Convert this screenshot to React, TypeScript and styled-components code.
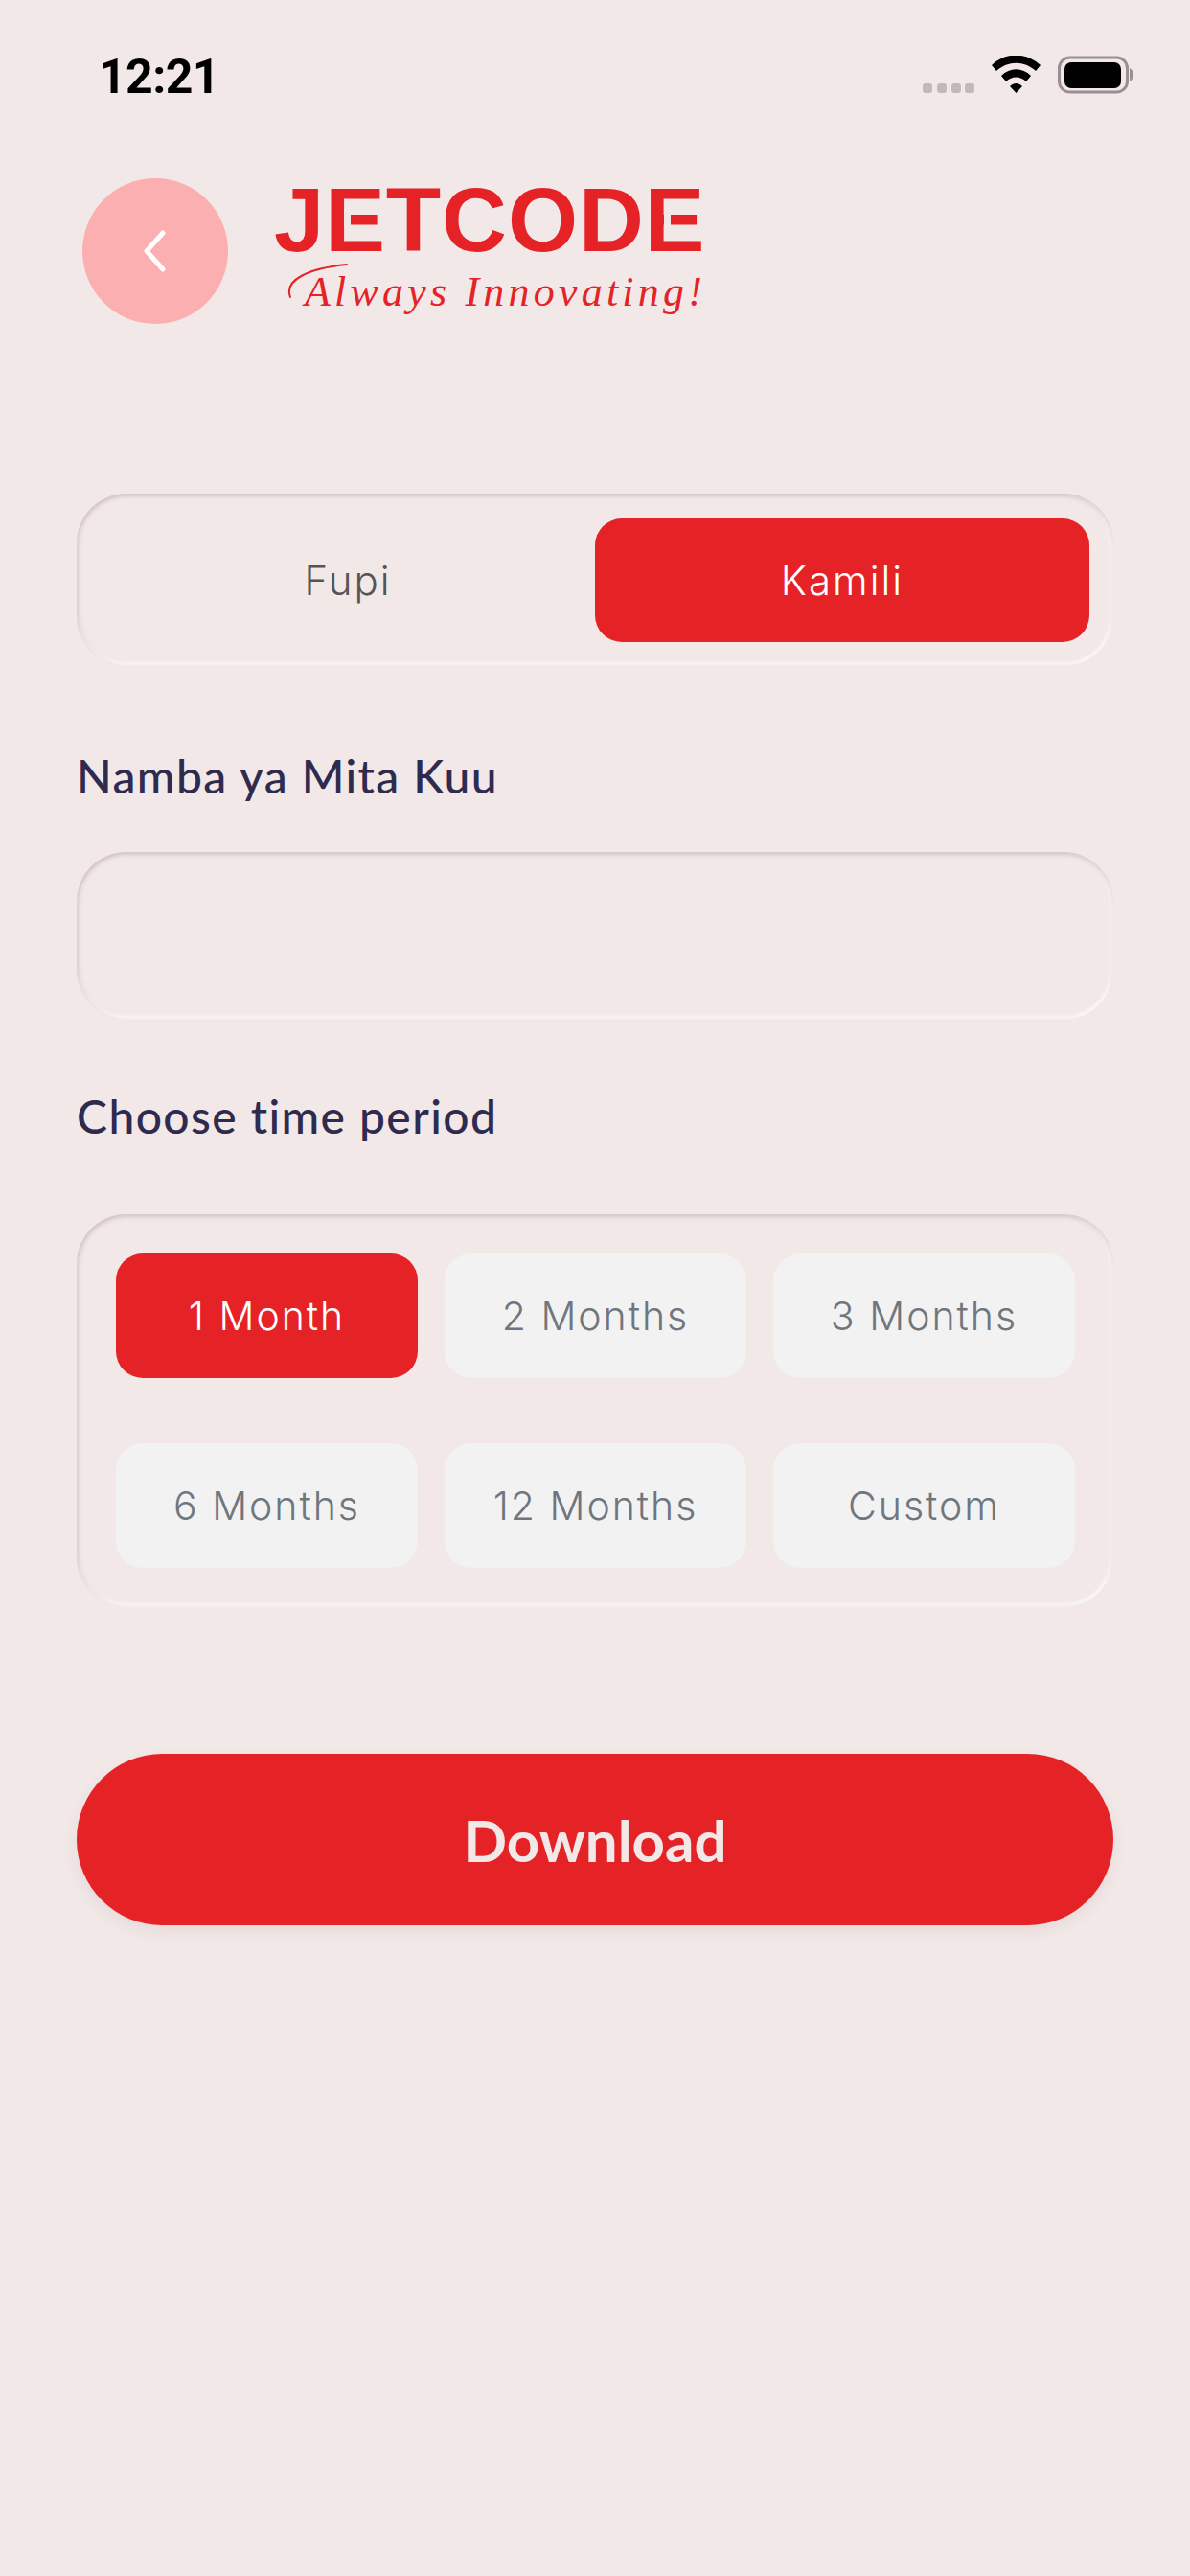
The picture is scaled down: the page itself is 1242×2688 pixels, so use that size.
import styled, { createGlobalStyle } from "styled-components";

const RED = "#e52327";
const BG = "#f2e8e8";

const GlobalStyle = createGlobalStyle`
   html, body {
      margin: 0;
      padding: 0;
      background: ${BG};
   }
   * {
      box-sizing: border-box;
   }
`;

const Page = styled.div`
   width: 1242px;
   height: 2688px;
   overflow: hidden;
   background: ${BG};
   font-family: "Lato", "Liberation Sans", sans-serif;
`;

const StatusBar = styled.div`
   height: 186px;
   padding: 53px 58px 0 103px;
   display: flex;
   justify-content: space-between;
   align-items: flex-start;
`;

const Clock = styled.span`
   font-family: "Roboto", sans-serif;
   font-weight: 700;
   font-size: 50px;
   line-height: 55px;
   letter-spacing: -0.6px;
   color: #000;
`;

const StatusIcons = styled.div`
   display: flex;
   align-items: flex-start;
   padding-top: 5px;
`;

const Header = styled.header`
   display: flex;
   align-items: flex-start;
   gap: 50px;
   padding-left: 86px;
`;

const BackButton = styled.button`
   width: 152px;
   height: 152px;
   flex: none;
   border: none;
   padding: 0;
   border-radius: 50%;
   background: #fbafb0;
   display: flex;
   align-items: center;
   justify-content: center;
`;

const Logo = styled.div`
   position: relative;
   width: 450px;
   padding-top: 6px;
   color: ${RED};
`;

const LogoTitle = styled.div`
   font-family: "Liberation Sans", sans-serif;
   font-weight: 700;
   font-size: 94px;
   line-height: 76px;
   white-space: nowrap;
   margin-left: -2px;
   letter-spacing: 0.9px;
   font-kerning: none;
`;

const LogoNotch = styled.span<{ $left: number }>`
   position: absolute;
   top: 32px;
   left: ${(p) => p.$left}px;
   width: 7px;
   height: 18px;
   background: ${BG};
`;

const LogoSwash = styled.svg`
   position: absolute;
   top: 88px;
   left: 10px;
`;

const LogoTagline = styled.div`
   font-family: "Liberation Serif", serif;
   font-style: italic;
   font-size: 44px;
   line-height: 50px;
   white-space: nowrap;
   margin: 12px 0 0 30px;
   letter-spacing: 4.2px;
`;

const Form = styled.main`
   padding: 329px 80px 0 80px;
   margin-top: -152px;
`;

const insetWell = `
   box-shadow:
      inset 0 3px 4px rgba(150, 130, 130, 0.3),
      inset 3px 0 4px rgba(150, 130, 130, 0.14),
      inset 0 -4px 3px rgba(255, 255, 255, 0.6),
      inset -4px 0 3px rgba(255, 255, 255, 0.5);
`;

const Segmented = styled.div`
   height: 180px;
   border-radius: 52px;
   padding: 26px 25px 25px 25px;
   display: grid;
   grid-template-columns: 1fr 516px;
   ${insetWell}
`;

const SegmentButton = styled.div<{ $active?: boolean }>`
   border-radius: 28px;
   display: flex;
   align-items: center;
   justify-content: center;
   font-family: "Inter", sans-serif;
   font-size: 42px;
   letter-spacing: 2px;
   font-weight: 300;
   padding-bottom: 1px;
   background: ${(p) => (p.$active ? RED : "transparent")};
   color: ${(p) => (p.$active ? "#fff" : "#555")};
`;

const FieldLabel = styled.div<{ $top: number }>`
   margin-top: ${(p) => p.$top}px;
   font-size: 48px;
   line-height: 56px;
   font-weight: 500;
   letter-spacing: 1.4px;
   color: #2e2b4f;
`;

const TextField = styled.div`
   height: 175px;
   margin-top: 51px;
   border-radius: 52px;
   ${insetWell}
`;

const PeriodGrid = styled.div`
   height: 410px;
   margin-top: 74px;
   border-radius: 52px;
   padding: 41px;
   display: grid;
   grid-template-columns: repeat(3, 315px);
   grid-auto-rows: 130px;
   column-gap: 28px;
   row-gap: 68px;
   ${insetWell}
`;

const PeriodButton = styled.div<{ $active?: boolean }>`
   border-radius: 28px;
   display: flex;
   align-items: center;
   justify-content: center;
   font-family: "Inter", sans-serif;
   font-size: 41px;
   font-weight: 300;
   letter-spacing: 2px;
   padding-bottom: 1px;
   background: ${(p) => (p.$active ? RED : "#f2f2f2")};
   color: ${(p) => (p.$active ? "#fff" : "#6f767d")};
`;

const DownloadButton = styled.button`
   width: 100%;
   height: 179px;
   margin-top: 153px;
   border: none;
   border-radius: 90px;
   background: ${RED};
   color: ${BG};
   font-family: "Lato", sans-serif;
   font-size: 60px;
   font-weight: 700;
   box-shadow: 0 6px 14px rgba(170, 130, 130, 0.14);
`;

const periods = ["1 Month", "2 Months", "3 Months", "6 Months", "12 Months", "Custom"];

function App() {
   return (
      <Page>
         <GlobalStyle />
         <StatusBar>
            <Clock>12:21</Clock>
            <StatusIcons>
               <svg width="224" height="44" viewBox="0 0 224 44">
                  <g fill="#c2b8ba">
                     <rect x="3" y="29" width="10" height="10" rx="3" />
                     <rect x="18" y="29" width="10" height="10" rx="3" />
                     <rect x="33" y="29" width="10" height="10" rx="3" />
                     <rect x="47" y="29" width="10" height="10" rx="3" />
                  </g>
                  <path
                     transform="translate(5 -3)"
                     d="M70 13 C84 -1 106 -1 121 13 L116 19 C104 8 87 8 75 19 Z M80 24 C89 15 102 15 111 24 L106 30 C100 24 91 24 85 30 Z M89 35 C93 31 98 31 102 35 L95.5 42 Z"
                     fill="#000"
                  />
                  <rect x="145.5" y="2" width="71" height="36" rx="11" fill="none" stroke="#9a9093" strokeWidth="3" />
                  <rect x="151" y="7" width="59" height="27" rx="7" fill="#000" />
                  <path d="M219 13 C224 15 224 25 219 27 Z" fill="#9a9093" />
               </svg>
            </StatusIcons>
         </StatusBar>

         <Header>
            <BackButton type="button">
               <svg width="36" height="48" viewBox="0 0 36 48" fill="none">
                  <path d="M26 5 L9 24 L26 43" stroke="#fff" strokeWidth="5" strokeLinecap="round" strokeLinejoin="round" />
               </svg>
            </BackButton>
            <Logo>
               <LogoTitle>JETCODE</LogoTitle>
               <LogoNotch $left={71} />
               <LogoNotch $left={405} />
               <LogoSwash width="70" height="40" viewBox="0 0 70 40" fill="none">
                  <path d="M5 36 C-2 18 24 6 64 2" stroke={RED} strokeWidth="2" strokeLinecap="round" />
               </LogoSwash>
               <LogoTagline>Always Innovating!</LogoTagline>
            </Logo>
         </Header>

         <Form>
            <Segmented>
               <SegmentButton>Fupi</SegmentButton>
               <SegmentButton $active>Kamili</SegmentButton>
            </Segmented>

            <FieldLabel $top={87}>Namba ya Mita Kuu</FieldLabel>
            <TextField />

            <FieldLabel $top={73}>Choose time period</FieldLabel>
            <PeriodGrid>
               {periods.map((period, i) => (
                  <PeriodButton key={period} $active={i === 0}>
                     {period}
                  </PeriodButton>
               ))}
            </PeriodGrid>

            <DownloadButton type="button">Download</DownloadButton>
         </Form>
      </Page>
   );
}

export default App;
